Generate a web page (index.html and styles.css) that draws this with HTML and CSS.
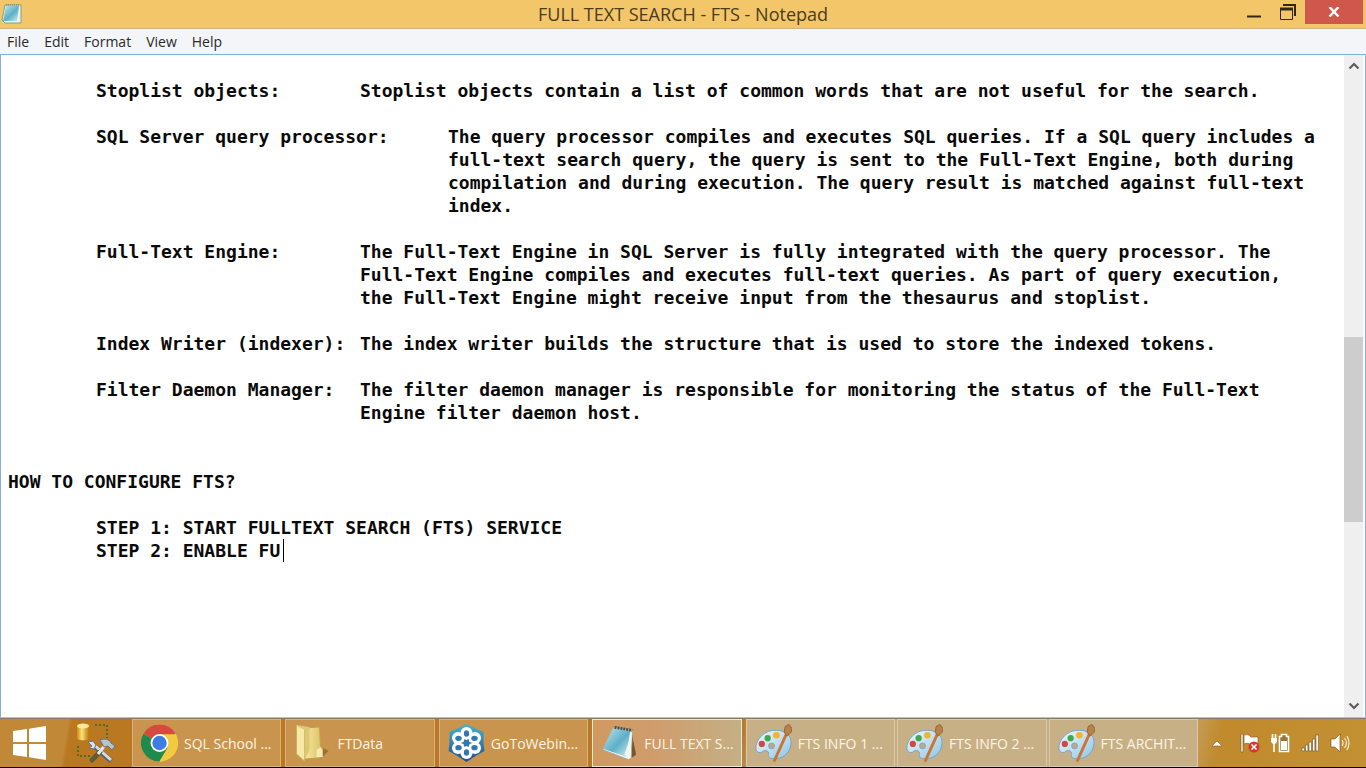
FILE: index.html
```html
<!DOCTYPE html>
<html lang="en">
<head>
<meta charset="utf-8">
<title>FULL TEXT SEARCH - FTS - Notepad</title>
<link rel="stylesheet" href="styles.css">
</head>
<body>
<svg class="defs" aria-hidden="true">
  <defs>
    <linearGradient id="pad" x1="0" y1="0" x2="1" y2="1"><stop offset="0" stop-color="#c4e6ee"/><stop offset=".55" stop-color="#5cb0c8"/><stop offset="1" stop-color="#d4eef2"/></linearGradient>
    <linearGradient id="folder" x1="0" y1="0" x2="1" y2="0"><stop offset="0" stop-color="#f6e9a6"/><stop offset="1" stop-color="#dcc060"/></linearGradient>
    <linearGradient id="goto" x1="0" y1="0" x2="0" y2="1"><stop offset="0" stop-color="#45b4cc"/><stop offset="1" stop-color="#254d96"/></linearGradient>
    <linearGradient id="drum" x1="0" y1="0" x2="1" y2="0"><stop offset="0" stop-color="#c98a14"/><stop offset=".4" stop-color="#ffe07a"/><stop offset="1" stop-color="#b8780c"/></linearGradient>
    <linearGradient id="plate" x1="0" y1="0" x2="1" y2="1"><stop offset="0" stop-color="#f4fafd"/><stop offset="1" stop-color="#8fc4e4"/></linearGradient>
    <symbol id="paint" viewBox="0 0 38 38">
      <path d="M1 25C0 16 10 5 22 6c10 0 16 6 15 14-1 10-9 16-19 15-4 0-5-3-4-5 0-3-3-4-5-3l-3 2c-3 0-5-2-5-4z" fill="url(#plate)" stroke="#6ea6cc"/>
      <circle cx="17" cy="22" r="3" fill="#bda988" stroke="#7fa8c4"/>
      <circle cx="7" cy="20" r="3.2" fill="#cf4a40"/><circle cx="13" cy="14" r="3.2" fill="#42a84c"/><circle cx="22" cy="11" r="3.4" fill="#eeb62e"/>
      <path d="M33 8L20 37" stroke="#cc7430" stroke-width="3" stroke-linecap="round"/>
      <path d="M30 8l1-6 4-2 3 4-1 4-4 4z" fill="#b98248" stroke="#976232"/>
    </symbol>
  </defs>
</svg>
<div class="desktop">
  <main class="window">
    <header class="titlebar">
      <svg class="app-icon" viewBox="0 0 22 22" aria-hidden="true"><path d="M4 2h16v18H4L1 17z" fill="#e8f4f0" stroke="#8a9c80"/><path d="M5 3h13l-2 15H2z" fill="url(#pad)"/><path d="M5 2h14" stroke="#587c80" stroke-dasharray="1 1"/></svg>
      <h1 class="title">FULL TEXT SEARCH - FTS - Notepad</h1>
      <div class="controls">
        <button class="control" aria-label="Minimize"><svg width="14" height="18" viewBox="0 0 14 18"><path d="M0 13.500h14" stroke="#2e2818" stroke-width="2"/></svg></button>
        <button class="control" aria-label="Restore"><svg width="16" height="16" viewBox="0 0 16 16" fill="none" stroke="#2e2818"><path d="M3 1h12v11" stroke-width="2"/><path d="M.5 4.500h12v11H.5z"/><path d="M0 5h13" stroke-width="3"/></svg></button>
        <button class="control close" aria-label="Close"><svg width="12" height="10" viewBox="0 0 12 10"><path d="M1.500 0L10.500 9.500M10.500 0L1.500 9.500" stroke="#fff" stroke-width="2.400"/></svg></button>
      </div>
    </header>
    <nav class="menubar">
      <button>File</button><button>Edit</button><button>Format</button><button>View</button><button>Help</button>
    </nav>
    <section class="workspace">
      <div class="page">
        <textarea class="editor" aria-label="Document text" wrap="off" spellcheck="false">&#10;
	Stoplist objects:	Stoplist objects contain a list of common words that are not useful for the search.

	SQL Server query processor:	The query processor compiles and executes SQL queries. If a SQL query includes a
					full-text search query, the query is sent to the Full-Text Engine, both during
					compilation and during execution. The query result is matched against full-text
					index.

	Full-Text Engine:	The Full-Text Engine in SQL Server is fully integrated with the query processor. The
				Full-Text Engine compiles and executes full-text queries. As part of query execution,
				the Full-Text Engine might receive input from the thesaurus and stoplist.

	Index Writer (indexer):	The index writer builds the structure that is used to store the indexed tokens.

	Filter Daemon Manager:	The filter daemon manager is responsible for monitoring the status of the Full-Text
				Engine filter daemon host.


HOW TO CONFIGURE FTS?

	STEP 1: START FULLTEXT SEARCH (FTS) SERVICE
	STEP 2: ENABLE FU</textarea>
        <span class="caret"></span>
      </div>
      <div class="scrollbar">
        <button aria-label="Scroll up"><svg width="12" height="8" viewBox="0 0 12 8"><path d="M1.500 6.500L6 2l4.500 4.500" fill="none" stroke="#5c5c5c" stroke-width="2.200"/></svg></button>
        <div class="track"><div class="thumb"></div></div>
        <button aria-label="Scroll down"><svg width="12" height="8" viewBox="0 0 12 8"><path d="M1.500 1.500L6 6l4.500-4.500" fill="none" stroke="#5c5c5c" stroke-width="2.200"/></svg></button>
      </div>
    </section>
  </main>
  <footer class="taskbar">
    <button class="start" aria-label="Start"><svg width="34" height="34" viewBox="0 0 34 34"><path d="M0 5l14-2v13H0zM16 2.700L33 0v16H16zM0 18h14v13L0 29zM16 18h17v16l-17-2.700z" fill="#fff"/></svg></button>
    <button class="pinned" aria-label="SQL Server Management Studio"><svg width="42" height="42" viewBox="0 0 42 42">
      <path d="M19 3h12v13M2 24v10h14" fill="none" stroke="#4a7022" stroke-width="2" stroke-dasharray="2 2"/>
      <path d="M1 4v12c0 3 12 3 12 0V4z" fill="url(#drum)"/><ellipse cx="7" cy="4" rx="6" ry="2.500" fill="#ffeaa0"/>
      <path d="M35 39L17 23" stroke="#59616c" stroke-width="5"/><path d="M35 38L17 22" stroke="#d4dce4" stroke-width="3"/>
      <path d="M12 20l5-1 3 4-2 4-5-1 3-2z" fill="#d9e2ea" stroke="#69727c"/>
      <path d="M16 38l8-8" stroke="#655a36" stroke-width="5" stroke-linecap="round"/><path d="M22 32l8-10" stroke="#e4e8ec" stroke-width="3"/>
      <path d="M24 18c5-2 9-1 11 3l4 3-3 4-4-4-4 1z" fill="#b6c4d0" stroke="#68717b"/>
    </svg></button>
    <div class="tasks">
      <button class="task"><svg viewBox="0 0 36 36"><circle cx="18" cy="18" r="18" fill="#e9c23c"/><path d="M18 18L2.400 9A18 18 0 0 1 33.600 9z" fill="#d44a3c"/><path d="M2.400 9A18 18 0 0 0 18 36l8-13.500L18 18z" fill="#208a4c"/><path d="M18 9.500h15.900A18 18 0 0 1 18 36l8-13.500z" fill="#f3c93f"/><circle cx="18" cy="18" r="8.700" fill="#fff"/><circle cx="18" cy="18" r="7" fill="#3d7de4"/></svg><span>SQL School ...</span></button>
      <button class="task"><svg viewBox="0 0 36 38"><path d="M26 35l8-8-5-3z" fill="#80561e" opacity=".6"/><path d="M9 4l16-1 1 20 2 3v7l-4 1-14 1z" fill="url(#folder)" stroke="#c4a448"/><path d="M2 1l8 4v32l-8-7z" fill="#f5e8a8" stroke="#cbb258"/><path d="M2 1l13 2v23l-5 10V6z" fill="#e0c772"/><path d="M22 33v-7l4-3 2 3v7z" fill="#f6eab4"/></svg><span>FTData</span></button>
      <button class="task"><svg viewBox="0 0 36 38"><path d="M18 0l8 4 9 4v10l1 9-9 5-9 6-9-6-9-5 1-9V8l9-4z" fill="url(#goto)"/><g fill="#fff"><circle cx="18" cy="9" r="6"/><circle cx="26.500" cy="14" r="6"/><circle cx="26.500" cy="24" r="6"/><circle cx="18" cy="29" r="6"/><circle cx="9.500" cy="24" r="6"/><circle cx="9.500" cy="14" r="6"/><circle cx="18" cy="19" r="9"/></g><g fill="#2f78b4"><ellipse cx="18" cy="9.500" rx="2.600" ry="3.200"/><ellipse cx="26" cy="14.300" rx="3.200" ry="2.600"/><ellipse cx="26" cy="23.700" rx="3.200" ry="2.600"/><ellipse cx="18" cy="28.500" rx="2.600" ry="3.200"/><ellipse cx="10" cy="23.700" rx="3.200" ry="2.600"/><ellipse cx="10" cy="14.300" rx="3.200" ry="2.600"/><path d="M16 15l2 1 2-1 1 3 3 1-3 1-1 3-2-1-2 1-1-3-3-1 3-1z"/></g></svg><span>GoToWebin...</span></button>
      <button class="task active"><svg viewBox="0 0 38 38"><path d="M31 6l5 25-7 5-2-3z" fill="#76552f"/><path d="M14 3l18 4-1 28-3 1L2 26z" fill="#f2f7f4" stroke="#a9aa98"/><path d="M12 4l18 3-4 26-24-8z" fill="url(#pad)"/><path d="M32 7l-8 24 6 4z" fill="#f2f5ee"/><path d="M14 3l18 3" stroke="#405056" stroke-width="3" stroke-dasharray="2 1"/></svg><span>FULL TEXT S...</span></button>
      <button class="task light"><svg><use href="#paint"/></svg><span>FTS INFO 1 ...</span></button>
      <button class="task light joined"><svg><use href="#paint"/></svg><span>FTS INFO 2 ...</span></button>
      <button class="task light joined"><svg><use href="#paint"/></svg><span>FTS ARCHIT...</span></button>
    </div>
    <div class="tray">
      <button class="more" aria-label="Show hidden icons"><svg width="10" height="20" viewBox="0 0 10 20"><path d="M0 13l5-5 5 5z" fill="#fff" stroke="#82602c" stroke-width=".6"/></svg></button>
      <button aria-label="Action Center"><svg width="20" height="22" viewBox="0 0 20 22"><path d="M1 2h2v18H1z" fill="#fff" stroke="#6d5125" stroke-width=".6"/><path d="M4 3c4-1 5 0 7 2h7v8H11c-2-2-4-2-7-1z" fill="#fff" stroke="#6d5125" stroke-width=".6"/><circle cx="14" cy="15" r="5.500" fill="#d23a30"/><path d="M11.500 12.500l5 5m0-5l-5 5" stroke="#fff" stroke-width="1.600"/></svg></button>
      <button aria-label="Battery"><svg width="20" height="22" viewBox="0 0 20 22"><path d="M9.500 4.500h2v-2h5v2h2v15h-9z" fill="#9a7434" stroke="#fff" stroke-width="1.600"/><path d="M11 9h6v9h-6z" fill="#fff"/><path d="M2.500 2v4M5.500 2v4M4 8v12" stroke="#fff" stroke-width="1.600" fill="none"/><path d="M1 6h6v4l-2 2H3l-2-2z" fill="#fff"/></svg></button>
      <button aria-label="Network"><svg width="20" height="20" viewBox="0 0 20 20" fill="#fff" stroke="#6d5125" stroke-width=".6"><path d="M2 15h2.400v3H2zM5.500 12h2.400v6H5.500zM9 9h2.400v9H9zM12.500 6h2.400v12h-2.400zM16 2h2.400v16H16z"/></svg></button>
      <button aria-label="Volume"><svg width="20" height="20" viewBox="0 0 20 20"><path d="M1 6h4l5-5v18l-5-5H1z" fill="#fff" stroke="#6d5125" stroke-width=".6"/><path d="M12 7q2 3 0 6M14.500 5q4 5 0 10M17 3q4 7 0 14" fill="none" stroke="#f8ead0" stroke-width="1.200"/></svg></button>
    </div>
  </footer>
</div>
</body>
</html>
```
FILE: styles.css
```css
* { box-sizing: border-box; }
body { margin: 0; font-family: "Open Sans", "Noto Sans", sans-serif; }
button { margin: 0; padding: 0; border: 0; background: none; font: inherit; color: inherit; }
svg { display: block; flex: none; }
.defs { position: absolute; width: 0; height: 0; }

.desktop { height: 100vh; display: flex; flex-direction: column; background: #000; padding-bottom: 1px; }
.window { flex: 1; min-height: 0; display: flex; flex-direction: column; background: #fff; }

.titlebar {
  flex: none; height: 29px; display: grid; grid-template-columns: 1fr auto 1fr;
  background: #f3c669; border-bottom: 1px solid #cbb283;
}
.app-icon { width: 22px; height: 22px; margin: 3px 0 0 1px; }
.title { margin: 0; font-size: 18px; line-height: 29px; font-weight: 400; color: #4a3c1c; white-space: nowrap; }
.controls { display: flex; justify-content: flex-end; padding-right: 3px; }
.control { width: 34px; height: 24px; display: flex; align-items: center; justify-content: center; }
.control.close { width: 58px; background: #cf574b; }

.menubar { flex: none; height: 25px; display: flex; gap: 15px; padding-left: 7px; background: #f3f5f8; font-size: 14px; line-height: 25px; color: #2a2a2a; }

.workspace { flex: 1; min-height: 0; display: flex; border: 1px solid #7fb0de; border-bottom-color: #9ccbe4; }
.page { flex: 1; min-width: 0; position: relative; font: bold 18px/23px "DejaVu Sans Mono", monospace; }
.editor {
  display: block; width: 100%; height: 100%; padding: 1px 0 0 7px; border: 0; outline: 0; resize: none;
  overflow: hidden; background: #fff; color: #0a0a0a; font: inherit; white-space: pre; tab-size: 88px;
}
.caret { position: absolute; left: 282px; top: 484px; width: 1px; height: 23px; background: #000; }
.scrollbar { width: 21px; flex: none; display: flex; flex-direction: column; background: #efefef; border-right: 2px solid #fff; }
.scrollbar button { height: 22px; flex: none; display: flex; align-items: center; justify-content: center; }
.track { flex: 1; display: grid; grid-template-rows: 42% 30% 1fr; }
.thumb { grid-row: 2; background: #cdcdcd; }

.taskbar {
  flex: none; height: 49px; display: flex; border-top: 1px solid #857b68;
  background: linear-gradient(100deg, #c18838 0, #c18838 5%, #b97820 5.300%, #b8792a 40%, #b4762e 54%, #c3aa7c 56%, #c7b188 85%, #c18a2c 89%, #c39132 100%);
}
.start { width: 66px; display: flex; align-items: center; padding-left: 13px; }
.pinned { width: 66px; display: flex; align-items: center; padding-left: 10px; }
.tasks { display: flex; gap: 4px; flex: 0 1 1066px; min-width: 0; }
.task {
  flex: 1; min-width: 0; display: flex; align-items: center; gap: 6px; padding-left: 8px;
  border: 1px solid #d9b27c; background: #c8944e; color: #fff4e2; font-size: 14px; white-space: nowrap;
}
.task svg { width: 37px; height: 38px; }
.task span { flex: 1; min-width: 0; overflow: hidden; text-align: left; }
.task.active { border: 1px solid #f3e6cc; background: linear-gradient(90deg, #cf9a60, #d09c6c 40%, #c4b084); }
.task.light { background: #c8b086; border-color: #dccaa8; }
.task.joined { margin-left: -2px; }
.tray { flex: 1; display: flex; align-items: center; gap: 10px; padding-left: 14px; }
.more { margin-right: 8px; }
```
